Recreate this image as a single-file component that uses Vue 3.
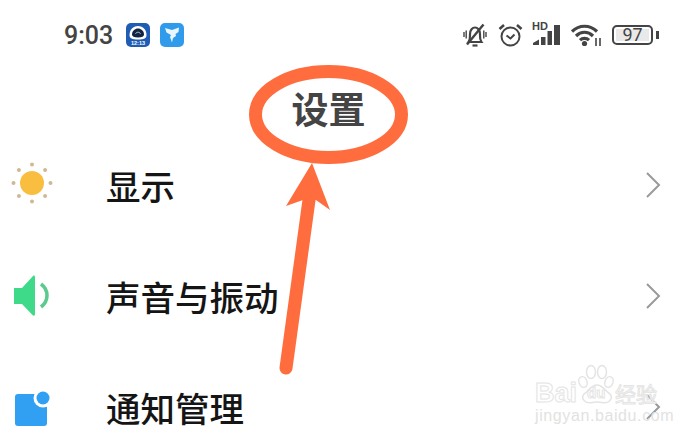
<template>
  <div class="screen">
    <!-- status bar -->
    <div class="status">
      <span class="time">9:03</span>
      <svg class="app" width="24" height="24" viewBox="0 0 24 24">
        <rect width="24" height="24" rx="5" fill="#1f5cb3" />
        <path d="M3.500 12C3.500 6 8 3 12 3S20.500 6 20.500 12C20.500 15.500 18 16.500 12 16.500S3.500 15.500 3.500 12Z" fill="#fff" />
        <path d="M6 11.500C6 8 9 5.500 12 5.500S18 8 18 11.500C18 13.500 16 14.500 12 14.500S6 13.500 6 11.500Z" fill="#14233f" />
        <path d="M9.500 11A2.600 2.600 0 0 1 14.500 11" fill="none" stroke="#8fb6e6" stroke-width="1" />
        <text x="12" y="22" text-anchor="middle" class="app-text">12:13</text>
      </svg>
      <svg class="app second" width="24" height="24" viewBox="0 0 24 24">
        <rect width="24" height="24" rx="5" fill="#2f9bea" />
        <path d="M5 5L12 7L19 4.500L18.500 9L15.500 11L16 13L13 15L12 19.500L10 14L11 12L6.500 9.500Z" fill="#e9f6ff" />
      </svg>

      <div class="status-right">
        <svg width="24" height="24" viewBox="0 0 24 24" fill="none" stroke="#444" stroke-width="2.200">
          <path d="M5.500 19C7.500 16 7 13 7 11C7 7 9.500 4.500 12 4.500S17 7 17 11C17 13 16.500 16 18.500 19H5.500Z" />
          <path d="M9.500 22.500H14.500" stroke-width="2.200" />
          <path d="M4 21.500L20.500 1.500" stroke-width="2.400" />
          <path d="M1 9V14M3.200 7.500V15.500M20.800 7.500V15.500M23 9V14" stroke-width="1.400" />
        </svg>
        <svg class="alarm" width="25" height="24" viewBox="0 0 25 24" fill="none" stroke="#444" stroke-width="2">
          <circle cx="12.500" cy="13.500" r="9" />
          <path d="M8.500 12.500L12.500 15.500L16.500 11.500" />
          <path d="M1.500 6L6 2M23.500 6L19 2" stroke-width="2.600" />
        </svg>
        <div class="signal">
          <span class="hd">HD</span>
          <svg width="29" height="24" viewBox="0 0 29 24" fill="#444">
            <path d="M1 20L7 16.500V22H1ZM9 14H13.500V22H9ZM15.500 8H20V22H15.500ZM22 2H28V22H22Z" />
          </svg>
        </div>
        <svg class="wifi" width="31" height="24" viewBox="0 0 31 24" fill="none" stroke="#444" stroke-width="3.200">
          <path d="M1 8.500C8 1.500 19 1.500 26 8.500M5 13C10 8 17 8 22 13M9 17.200C11.500 14.800 15.500 14.800 18 17.200" />
          <circle cx="13.500" cy="20.500" r="2.600" fill="#444" stroke="none" />
          <path d="M25 15V23M29 15V23" stroke-width="1.600" />
        </svg>
        <div class="battery">
          <div class="battery-body"><span class="battery-level">97</span></div>
          <span class="battery-cap"></span>
        </div>
      </div>
    </div>

    <div class="title">设置</div>

    <!-- settings list -->
    <div v-for="row in rows" :key="row.name" class="row">
      <svg class="row-icon" width="64" height="64" viewBox="0 0 64 64">
        <template v-if="row.icon === 'sun'">
          <circle cx="32" cy="30" r="12" fill="#f9bd3f" />
          <circle v-for="(dot, i) in sunDots" :key="i" :cx="dot.x" :cy="dot.y" r="2" fill="#cfb995" />
        </template>
        <template v-else-if="row.icon === 'sound'">
          <path d="M14 24H22L33 12C34 11 35 12 35 13V50C35 52 33.500 52 32.500 51L22 40H14Z" fill="#3fd98a" />
          <path d="M41 20C49 26 49 37 41 43" fill="none" stroke="#5cc98d" stroke-width="3.500" />
        </template>
        <template v-else>
          <rect x="15" y="19" width="32" height="32" rx="3" fill="#319ff2" />
          <circle cx="43" cy="23" r="9.500" fill="#fff" />
          <circle cx="43" cy="23" r="6.500" fill="#319ff2" />
        </template>
      </svg>
      <span class="row-name">{{ row.name }}</span>
      <svg class="chevron" width="16" height="28" viewBox="0 0 16 28" fill="none" stroke="#9a9a9a" stroke-width="2">
        <path d="M2 2L14 14L2 26" />
      </svg>
    </div>

    <!-- hand drawn annotation on top of the screenshot -->
    <svg class="mark" width="698" height="439" viewBox="0 0 698 439">
      <ellipse cx="328.500" cy="114.500" rx="73" ry="43" fill="none" stroke="#ff6d3e" stroke-width="13" />
      <path d="M309 200L286 368" stroke="#ff6d3e" stroke-width="13" stroke-linecap="round" />
      <path d="M312 163L286 206L303 200H316L330 210Z" fill="#ff6d3e" />
    </svg>

    <!-- watermark -->
    <div class="watermark">
      <svg class="paw" width="40" height="40" viewBox="0 0 40 40" fill="rgba(255,255,255,0.7)" stroke="#e4e4e4" stroke-width="1.500">
        <ellipse cx="6" cy="18" rx="4" ry="5.500" transform="rotate(-20 6 18)" />
        <ellipse cx="14" cy="8" rx="4.500" ry="6.500" />
        <ellipse cx="25" cy="8" rx="4.500" ry="6.500" />
        <ellipse cx="32" cy="18" rx="4" ry="5.500" transform="rotate(20 32 18)" />
        <path d="M20 21C26 21 28 27 33 30C37 35 31 40 25 38.500C22 37.800 18 37.800 15 38.500C9 40 3 35 7 30C12 27 14 21 20 21Z" />
      </svg>
      <div class="wm-line"><span class="wm-bai">Bai</span><span class="wm-du">du</span><span class="wm-cn">经验</span></div>
      <div class="wm-url">jingyan.baidu.com</div>
    </div>
  </div>
</template>

<script setup>
const rows = [
  { name: "显示", icon: "sun" },
  { name: "声音与振动", icon: "sound" },
  { name: "通知管理", icon: "notice" },
];

// little dots around the sun
const sunDots = [];
for (let i = 0; i < 8; i++) {
  const a = (i * Math.PI) / 4;
  sunDots.push({
    x: 32 + 18.5 * Math.cos(a),
    y: 30 + 18.5 * Math.sin(a),
  });
}
</script>

<style scoped>
.screen {
  position: relative;
  width: 698px;
  height: 439px;
  overflow: hidden;
  background: #fff;
  font-family: "Noto Sans CJK SC", "Liberation Sans", sans-serif;
}

.status {
  display: flex;
  align-items: center;
  height: 24px;
  padding: 23px 39px 0 64px;
}
.time {
  width: 62px;
  font-family: "Roboto", sans-serif;
  font-size: 25px;
  font-weight: 500;
  color: #444;
}
.second {
  margin-left: 10px;
}
.app-text {
  font-family: "Liberation Sans", sans-serif;
  font-size: 5.500px;
  font-weight: 700;
  fill: #fff;
}
.status-right {
  display: flex;
  align-items: center;
  margin-left: auto;
}
.alarm {
  margin-left: 11px;
}
.signal {
  position: relative;
  width: 29px;
  height: 24px;
  margin-left: 9px;
}
.hd {
  position: absolute;
  top: -3px;
  left: 0;
  font-family: "Liberation Sans", sans-serif;
  font-size: 11px;
  font-weight: 700;
  color: #444;
}
.wifi {
  margin-left: 10px;
}
.battery {
  display: flex;
  align-items: center;
  margin-left: 10px;
}
.battery-body {
  box-sizing: border-box;
  width: 41px;
  height: 20px;
  padding: 2px;
  border: 2.500px solid #444;
  border-radius: 5px;
}
.battery-level {
  display: block;
  height: 100%;
  background: #e9e9e9;
  font-family: "Roboto", sans-serif;
  font-size: 18px;
  line-height: 11px;
  text-align: center;
  color: #444;
}
.battery-cap {
  width: 3px;
  height: 8px;
  margin-left: 3px;
  background: #444;
}

.title {
  margin-top: 42px;
  height: 40px;
  padding-right: 41px;
  font-size: 37px;
  font-weight: 700;
  line-height: 38px;
  text-align: center;
  color: #444;
}

.row {
  display: grid;
  grid-template-columns: 107px 1fr 16px;
  align-items: center;
  height: 111px;
  padding-right: 37px;
}
.row-name {
  margin-left: -1px;
  font-size: 34.500px;
  font-weight: 500;
  color: #151515;
}

.mark {
  position: absolute;
  top: 0;
  left: 0;
}

.watermark {
  position: absolute;
  top: 364px;
  left: 535px;
  width: 130px;
  white-space: nowrap;
}
.paw {
  position: absolute;
  top: 0;
  left: 42px;
}
.wm-line {
  position: relative;
  display: flex;
  align-items: center;
  height: 24px;
  margin-top: 17px;
  color: #fff;
  font-family: "Liberation Sans", sans-serif;
  -webkit-text-stroke: 1px #e4e4e4;
}
.wm-bai {
  width: 52px;
  font-size: 27px;
  font-weight: 700;
  line-height: 24px;
}
.wm-du {
  width: 28px;
  font-size: 15px;
  font-weight: 700;
  line-height: 24px;
}
.wm-cn {
  font-family: "Noto Sans CJK SC", sans-serif;
  font-size: 21px;
  line-height: 24px;
}
.wm-url {
  position: relative;
  margin-top: 2px;
  font-family: "Liberation Sans", sans-serif;
  font-size: 16px;
  line-height: 18px;
  letter-spacing: 0.600px;
  color: #e2e2e2;
}
</style>
